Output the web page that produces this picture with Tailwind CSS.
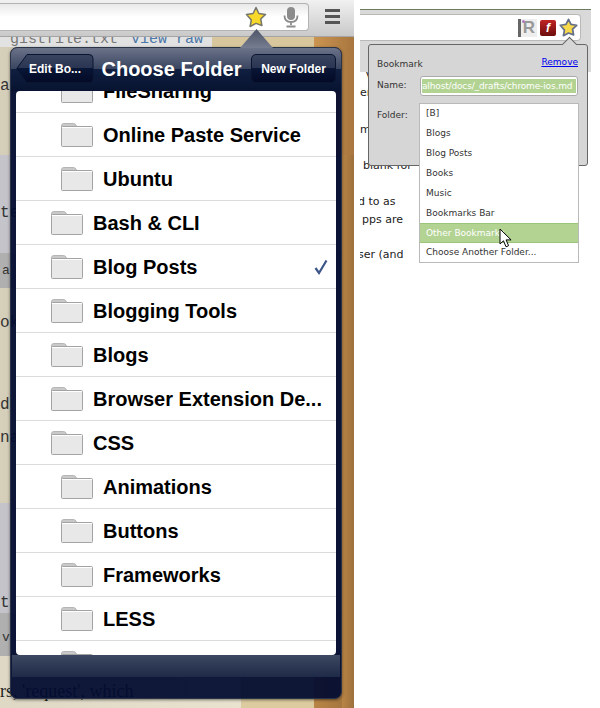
<!DOCTYPE html>
<html lang="en">
  <head>
    <meta charset="UTF-8" />
    <title>Choose Folder</title>
    <script src="https://cdn.jsdelivr.net/npm/@tailwindcss/browser@4"></script>
  </head>
  <body class="bg-white">
    <div class="flex w-[600px] h-[708px] overflow-hidden">
      <!-- left: chrome on ios -->
      <section class="relative w-[354px] h-full shrink-0 overflow-hidden flex flex-col font-['Liberation_Sans',sans-serif]">
        <!-- toolbar -->
        <div class="relative z-10 h-[37px] shrink-0 flex items-start bg-gradient-to-b from-[#f1f1f1] to-[#c9c9c9] border-b border-[#a5a5a5]">
          <div class="mt-[3px] w-[309px] h-[28px] shrink-0 flex items-center justify-end gap-[16px] pr-[9px] bg-gradient-to-b from-[#e9e9e9] via-white to-white border border-[#b3b3b3] rounded-r-[4px] border-l-0">
            <svg width="22" height="22" viewBox="0 0 22 22"><path d="M11 1.500l2.900 6 6.600.9-4.800 4.600 1.200 6.500L11 17.400l-5.900 3.100 1.200-6.500L1.500 8.400l6.600-.9z" fill="#f8d92a" stroke="#77766a" stroke-width="1.500" stroke-linejoin="round"/></svg>
            <svg width="16" height="22" viewBox="0 0 16 22"><rect x="4" y="1" width="8" height="13" rx="4" fill="#8c8c8c"/><path d="M1.500 9.500c0 4.500 3 6.500 6.500 6.500s6.500-2 6.500-6.500M8 16v3M3.500 20.500h9" fill="none" stroke="#8c8c8c" stroke-width="1.800"/></svg>
          </div>
          <div class="ml-[16px] mt-[9px] flex flex-col gap-[3px]">
            <div class="w-[15px] h-[3px] bg-[#555]"></div>
            <div class="w-[15px] h-[3px] bg-[#555]"></div>
            <div class="w-[15px] h-[3px] bg-[#555]"></div>
          </div>
        </div>
        <!-- page behind -->
        <div class="flex-1 relative flex flex-col font-['Liberation_Mono',monospace] text-[16px] text-[#333] whitespace-nowrap">
          <div class="h-[118px] shrink-0 flex">
            <div class="flex-1 flex flex-col">
              <div class="h-[10px] shrink-0 bg-[#e2e2e2] overflow-hidden pl-[10px] text-[15px] text-[#777] leading-[10px]"><div class="-mt-[2px]">gistfile.txt <span class="ml-[4px] text-[#4b76a8]">View raw</span></div></div>
              <div class="flex-1 pt-[31px] leading-none bg-gradient-to-r from-[#d6cfba] to-[#a39c8a]">able</div>
            </div>
            <div class="w-[102px] bg-[#d8c79c]"></div>
            <div class="w-[40px] bg-gradient-to-r from-[#cb9450] to-[#a8763f]"></div>
          </div>
          <div class="h-[98px] shrink-0 pt-[50px] leading-none bg-gradient-to-r from-[#c4c4ca] to-[#96969c]">te</div>
          <div class="h-[35px] shrink-0 flex items-center text-[13px] pl-[2px] bg-gradient-to-r from-[#b0b0b0] to-[#8a8a8a]">a</div>
          <div class="h-[215px] shrink-0 flex flex-col pt-[27px] leading-none bg-gradient-to-r from-[#d6cfba] to-[#a39c8a]">
            <span>ok</span><span class="mt-[66px]">d</span><span class="mt-[17px]">na</span>
          </div>
          <div class="h-[110px] shrink-0 pt-[92px] leading-none bg-gradient-to-r from-[#c4c4ca] to-[#96969c]">t</div>
          <div class="h-[43px] shrink-0 pt-[18px] pl-[2px] text-[13px] leading-none bg-gradient-to-r from-[#b0b0b0] to-[#8a8a8a]">v</div>
          <div class="flex-1 flex">
            <div class="flex-1 font-['Liberation_Serif',serif] text-[18px] pt-[26px] leading-none text-[#222] bg-gradient-to-r from-[#ded8c5] to-[#e8e2cf]">rs, 'request', which</div>
            <div class="w-[73px] bg-[#dccb9f]"></div>
            <div class="w-[40px] bg-gradient-to-r from-[#b98545] to-[#9d703c]"></div>
          </div>
          <div class="absolute top-[118px] bottom-0 right-0 w-[12px] bg-gradient-to-r from-[#b98545] to-[#9d703c]"></div>
        </div>

        <!-- popover arrow and panel -->
        <div class="absolute z-20 left-[240px] top-[29px] w-[33px] h-[19px] bg-gradient-to-b from-[#4f5568] to-[#767d90] [clip-path:polygon(50%_0,100%_100%,0_100%)]"></div>
        <div class="absolute left-[10px] top-[47px] w-[332px] h-[652px] rounded-[7px] bg-[#020c30]/94 border border-[#2b3346] flex flex-col items-stretch overflow-hidden shadow-[0_1px_3px_rgba(0,0,0,0.5)]">
          <header class="relative h-[43px] shrink-0 flex items-center justify-between pl-[5px] pr-[5px] pb-[2px] bg-[linear-gradient(to_bottom,#6b7389_0,#3a4560_48%,#101e40_49%,#071330_100%)]">
            <div class="relative w-[78px] h-[29px] flex items-center justify-center text-white text-[12px] font-bold">
              <svg class="absolute inset-0" width="78" height="29" viewBox="0 0 78 29"><defs><linearGradient id="btn" x1="0" y1="0" x2="0" y2="1"><stop offset="0" stop-color="#39445f"/><stop offset=".48" stop-color="#2a3553"/><stop offset=".5" stop-color="#0a1636"/><stop offset="1" stop-color="#020a26"/></linearGradient></defs><path d="M11 .5H73a4 4 0 0 1 4 4v20a4 4 0 0 1-4 4H11L.8 14.500z" fill="url(#btn)" stroke="#0b1530"/></svg>
              <span class="relative">Edit Bo...</span>
            </div>
            <h1 class="text-white text-[20px] font-bold leading-none -ml-[2px]">Choose Folder</h1>
            <div class="w-[85px] h-[29px] flex items-center justify-center rounded-[5px] bg-[linear-gradient(to_bottom,#39445f_0,#2a3553_48%,#0a1636_50%,#020a26_100%)] border border-[#0b1530] text-white text-[12px] font-bold">New Folder</div>
          </header>
          <main id="list" class="mx-[5px] h-[564px] shrink-0 rounded-[4px] bg-white overflow-hidden">
            <ul id="rows" class="-mt-[22px]"></ul>
          </main>
          <footer class="mx-[1px] h-[22px] shrink-0 bg-gradient-to-b from-[#3d4862] to-[#1e2a47]"></footer>
        </div>
      </section>

      <!-- right: chrome desktop -->
      <section class="relative flex-1 h-full overflow-hidden bg-white font-['DejaVu_Sans',sans-serif] text-[9px] text-[#333]">
        <div class="mt-[9px] ml-[6px] w-[231px] h-[63px] bg-[#d9d9d9] border-t border-[#6b7b60] pt-[4px]">
          <div class="w-[221px] h-[27px] bg-white border border-[#b9b9b9] border-l-0 rounded-r-[4px] flex items-center justify-end gap-[3px] pr-[2px]">
            <div class="relative w-[19px] h-[18px] bg-[#eee] border-l-[3px] border-[#666] text-[#999] font-['Liberation_Sans',sans-serif] text-[17px] font-bold leading-[18px] text-center">R<span class="absolute left-[1px] top-[1px] w-[3px] h-[3px] rounded-full bg-[#b07cc0]"></span></div>
            <div class="w-[16px] h-[16px] rounded-[2px] bg-gradient-to-b from-[#c22222] to-[#6b0d0d] text-white italic font-bold text-[12px] leading-[16px] text-center font-['Liberation_Sans',sans-serif]">f</div>
            <svg width="19" height="19" viewBox="0 0 22 22"><path d="M11 1.500l2.900 6 6.600.9-4.800 4.600 1.200 6.500L11 17.400l-5.900 3.100 1.200-6.500L1.500 8.400l6.600-.9z" fill="#f8d94a" stroke="#66708a" stroke-width="2" stroke-linejoin="round"/></svg>
          </div>
        </div>
        <div class="ml-[6px] overflow-hidden text-[11px] leading-[10px] text-[#222] whitespace-nowrap">
          <p class="pl-[6px]">V</p>
          <p class="mt-[6px]">er</p>
          <p class="mt-[27px]">m</p>
          <p class="mt-[26px] pl-[3px]">blank for</p>
          <p class="mt-[26px] -ml-[2px]">d to as</p>
          <p class="mt-[8px] ml-[2px]">pps are</p>
          <p class="mt-[25px] -ml-[2px]">ser (and</p>
        </div>

        <!-- bookmark bubble -->
        <div class="absolute left-[14px] top-[44px] w-[220px] h-[122px] bg-[#d6d6d6] border border-[#666] rounded-[3px]">
          <div class="absolute left-[195px] -top-[6px] w-[11px] h-[11px] rotate-45 bg-[#d6d6d6] border-l border-t border-[#666]"></div>
          <div class="relative flex justify-between pt-[11px] pl-[8px] pr-[9px]">
            <span class="leading-[12px] pt-[2px]">Bookmark</span>
            <a class="text-[#0000ee] underline leading-[12px]">Remove</a>
          </div>
          <div class="flex items-center mt-[6px] pl-[8px]">
            <span class="w-[43px]">Name:</span>
            <div class="w-[158px] h-[20px] bg-white border border-[#aaa] rounded-[3px] flex items-center px-[1px]"><span class="bg-[#b3d393] text-white w-full h-[14px] leading-[14px] overflow-hidden whitespace-nowrap tracking-[-0.15px]">alhost/docs/_drafts/chrome-ios.md</span></div>
          </div>
          <div class="pl-[8px] mt-[13px]">Folder:</div>
        </div>
        <!-- folder select dropdown -->
        <ul id="menu" class="absolute left-[65px] top-[103px] w-[160px] bg-white border border-[#b9b9b9]">
          <li class="h-[19px] pl-[6px] leading-[18px]">[B]</li>
          <li class="h-[20px] pl-[6px] leading-[20px]">Blogs</li>
          <li class="h-[20px] pl-[6px] leading-[20px]">Blog Posts</li>
          <li class="h-[20px] pl-[6px] leading-[20px]">Books</li>
          <li class="h-[20px] pl-[6px] leading-[20px]">Music</li>
          <li class="h-[20px] pl-[6px] leading-[20px]">Bookmarks Bar</li>
          <li class="h-[20px] pl-[6px] leading-[18px] bg-[#b3d393] border-y border-[#9cc47a] text-white">Other Bookmarks</li>
          <li class="h-[19px] pl-[6px] leading-[19px]">Choose Another Folder...</li>
        </ul>
        <!-- cursor -->
        <svg class="absolute left-[145px] top-[228px]" width="14" height="20" viewBox="0 0 14 20"><path d="M1 1v15l3.500-3.200 2.500 6 2.600-1.100-2.500-5.800h5z" fill="#fff" stroke="#000" stroke-width="1"/></svg>
      </section>
    </div>

    <script>
      // folder rows, indent = nesting level
      const folders = [
        { name: "FileSharing", indent: 1 },
        { name: "Online Paste Service", indent: 1 },
        { name: "Ubuntu", indent: 1 },
        { name: "Bash & CLI", indent: 0 },
        { name: "Blog Posts", indent: 0, checked: true },
        { name: "Blogging Tools", indent: 0 },
        { name: "Blogs", indent: 0 },
        { name: "Browser Extension De...", indent: 0 },
        { name: "CSS", indent: 0 },
        { name: "Animations", indent: 1 },
        { name: "Buttons", indent: 1 },
        { name: "Frameworks", indent: 1 },
        { name: "LESS", indent: 1 },
        { name: "", indent: 1 },
      ];

      const folderIcon = `<svg width="32" height="24" viewBox="0 0 32 24" class="shrink-0"><path d="M.5 23V3q0-2.500 2-2.500h10q2 0 3 2.500z" fill="#c9c9c9" stroke="#b5b5b5"/><rect x=".5" y="3.500" width="31" height="20" rx="1" fill="#e8e8e8" stroke="#a3a3a3"/><path d="M1 4.500h30" stroke="#fff"/></svg>`;
      const checkIcon = `<svg width="16" height="16" viewBox="0 0 16 16" class="absolute right-[7px] top-[14px]"><path d="M2.500 9l3.500 5L13.500 1.500" fill="none" stroke="#3d5688" stroke-width="2.200"/></svg>`;

      const rows = document.getElementById("rows");
      folders.forEach((f) => {
        const li = document.createElement("li");
        li.className = "relative h-[44px] flex items-center gap-[10px] border-b border-[#dcdcdc] text-[20px] font-bold text-black whitespace-nowrap";
        li.style.paddingLeft = 35 + f.indent * 10 + "px";
        li.innerHTML = folderIcon + "<span>" + f.name.replace("&", "&amp;") + "</span>" + (f.checked ? checkIcon : "");
        rows.appendChild(li);
      });
    </script>
  </body>
</html>
